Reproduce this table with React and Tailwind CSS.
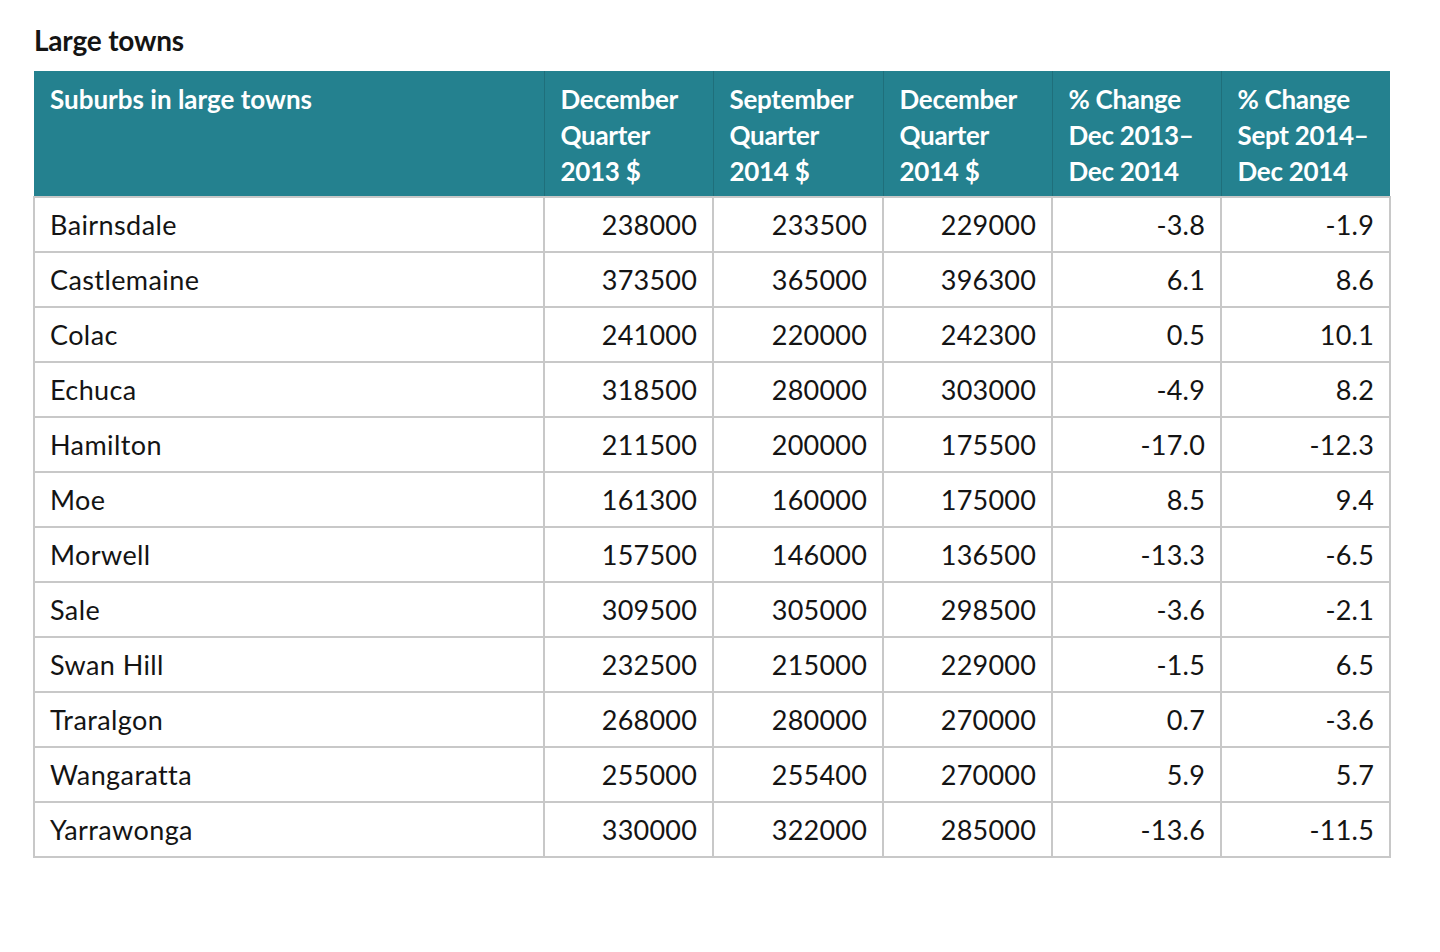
const rows = [
  ["Bairnsdale", "238000", "233500", "229000", "-3.8", "-1.9"],
  ["Castlemaine", "373500", "365000", "396300", "6.1", "8.6"],
  ["Colac", "241000", "220000", "242300", "0.5", "10.1"],
  ["Echuca", "318500", "280000", "303000", "-4.9", "8.2"],
  ["Hamilton", "211500", "200000", "175500", "-17.0", "-12.3"],
  ["Moe", "161300", "160000", "175000", "8.5", "9.4"],
  ["Morwell", "157500", "146000", "136500", "-13.3", "-6.5"],
  ["Sale", "309500", "305000", "298500", "-3.6", "-2.1"],
  ["Swan Hill", "232500", "215000", "229000", "-1.5", "6.5"],
  ["Traralgon", "268000", "280000", "270000", "0.7", "-3.6"],
  ["Wangaratta", "255000", "255400", "270000", "5.9", "5.7"],
  ["Yarrawonga", "330000", "322000", "285000", "-13.6", "-11.5"],
];

const headers = [
  ["December", "Quarter", "2013 $"],
  ["September", "Quarter", "2014 $"],
  ["December", "Quarter", "2014 $"],
  ["% Change", "Dec 2013–", "Dec 2014"],
  ["% Change", "Sept 2014–", "Dec 2014"],
];

const App = () => {
  return (
    <div className="min-h-screen bg-white px-[33px] pt-[24px] font-['Lato','Open_Sans',sans-serif] text-[#141414]">
      <h1 className="text-[28px] font-bold leading-[32px] ml-[1px] mb-[15px] tracking-[-0.2px]">
        Large towns
      </h1>

      <table className="w-[1356px] table-fixed border-collapse">
        <colgroup>
          <col className="w-[510px]" />
          <col className="w-[169px]" />
          <col className="w-[170px]" />
          <col className="w-[169px]" />
          <col className="w-[169px]" />
          <col className="w-[169px]" />
        </colgroup>
        <thead>
          <tr className="bg-[#24818f] text-white h-[126px]">
            <th className="align-top text-left font-bold text-[26px] leading-[36px] pl-4 pt-[10px] border-r border-[#1f6f7b] tracking-[0px]">
              Suburbs in large towns
            </th>
            {headers.map((h, i) => (
              <th
                key={i}
                className="align-top text-left font-bold text-[26px] leading-[36px] pl-4 pt-[10px] border-r border-[#1f6f7b] last:border-r-0 tracking-[-0.3px] whitespace-nowrap"
              >
                {h.map((line) => (
                  <div key={line}>{line}</div>
                ))}
              </th>
            ))}
          </tr>
        </thead>
        <tbody>
          {rows.map((r) => (
            <tr key={r[0]} className="h-[55px]">
              <td className="border-2 border-[#c8c8c8] pl-[15px] text-[27px] leading-none tracking-[0.4px]">
                {r[0]}
              </td>
              {r.slice(1).map((v, i) => (
                <td
                  key={i}
                  className="border-2 border-[#c8c8c8] pr-[15px] text-right text-[27px] leading-none tracking-[0.2px]"
                >
                  {v}
                </td>
              ))}
            </tr>
          ))}
        </tbody>
      </table>
    </div>
  );
};

export default App;
